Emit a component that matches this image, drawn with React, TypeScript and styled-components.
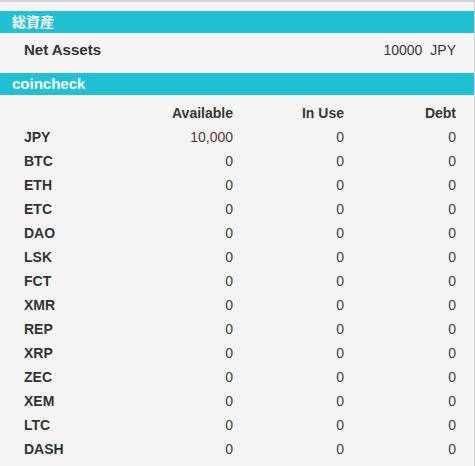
import React from "react";
import styled, { createGlobalStyle } from "styled-components";

const Global = createGlobalStyle`
  html, body { margin: 0; padding: 0; background: #f4f4f4; }
  body { font-family: "Liberation Sans", Arial, "Noto Sans CJK JP", sans-serif; }
`;

const Panel = styled.div`
  width: 475px;
  height: 466px;
  box-sizing: border-box;
  border-top: 2px solid #d2d2d2;
  border-right: 1px solid #cfcfcf;
  padding-top: 9px;
  background: #f4f4f4;
  overflow: hidden;
`;

const Bar = styled.div<{ $jp?: boolean }>`
  height: 22px;
  line-height: 22px;
  background: #21c1d3;
  color: #fff;
  font-weight: bold;
  font-size: ${(p) => (p.$jp ? "14px" : "15px")};
  padding-left: 12px;
  font-family: "Liberation Sans", Arial, "Noto Sans CJK JP", sans-serif;
`;

const AssetRow = styled.div`
  height: 40px;
  box-sizing: border-box;
  padding: 7px 18px 0 24px;
  display: flex;
  justify-content: space-between;
  line-height: 20px;
`;

const AssetLabel = styled.span`
  font-weight: bold;
  font-size: 15px;
  color: #333;
`;

const AssetValue = styled.span`
  font-size: 14px;
  color: #3d3440;
  display: flex;
  gap: 8px;
`;

const Table = styled.div`
  padding: 6px 18px 0 24px;
  display: grid;
  grid-template-columns: 98px 111px 111px 112px;
  grid-auto-rows: 24px;
  align-items: center;
  font-size: 14px;
`;

const HeadCell = styled.div`
  font-weight: bold;
  color: #3b3535;
  text-align: right;
`;

const Label = styled.div`
  font-weight: bold;
  color: #333;
`;

const Num = styled.div<{ $hl?: boolean }>`
  text-align: right;
  color: ${(p) => (p.$hl ? "#5a3535" : "#3c4048")};
`;

const coins: { name: string; avail: string }[] = [
  { name: "JPY", avail: "10,000" },
  { name: "BTC", avail: "0" },
  { name: "ETH", avail: "0" },
  { name: "ETC", avail: "0" },
  { name: "DAO", avail: "0" },
  { name: "LSK", avail: "0" },
  { name: "FCT", avail: "0" },
  { name: "XMR", avail: "0" },
  { name: "REP", avail: "0" },
  { name: "XRP", avail: "0" },
  { name: "ZEC", avail: "0" },
  { name: "XEM", avail: "0" },
  { name: "LTC", avail: "0" },
  { name: "DASH", avail: "0" },
];

export default function App() {
  return (
    <>
      <Global />
      <Panel>
        <Bar $jp>総資産</Bar>
        <AssetRow>
          <AssetLabel>Net Assets</AssetLabel>
          <AssetValue>
            <span>10000</span>
            <span>JPY</span>
          </AssetValue>
        </AssetRow>
        <Bar>coincheck</Bar>
        <Table>
          <div />
          <HeadCell>Available</HeadCell>
          <HeadCell>In Use</HeadCell>
          <HeadCell>Debt</HeadCell>
          {coins.map((c) => (
            <React.Fragment key={c.name}>
              <Label>{c.name}</Label>
              <Num $hl={c.avail !== "0"}>{c.avail}</Num>
              <Num>0</Num>
              <Num>0</Num>
            </React.Fragment>
          ))}
        </Table>
      </Panel>
    </>
  );
}
